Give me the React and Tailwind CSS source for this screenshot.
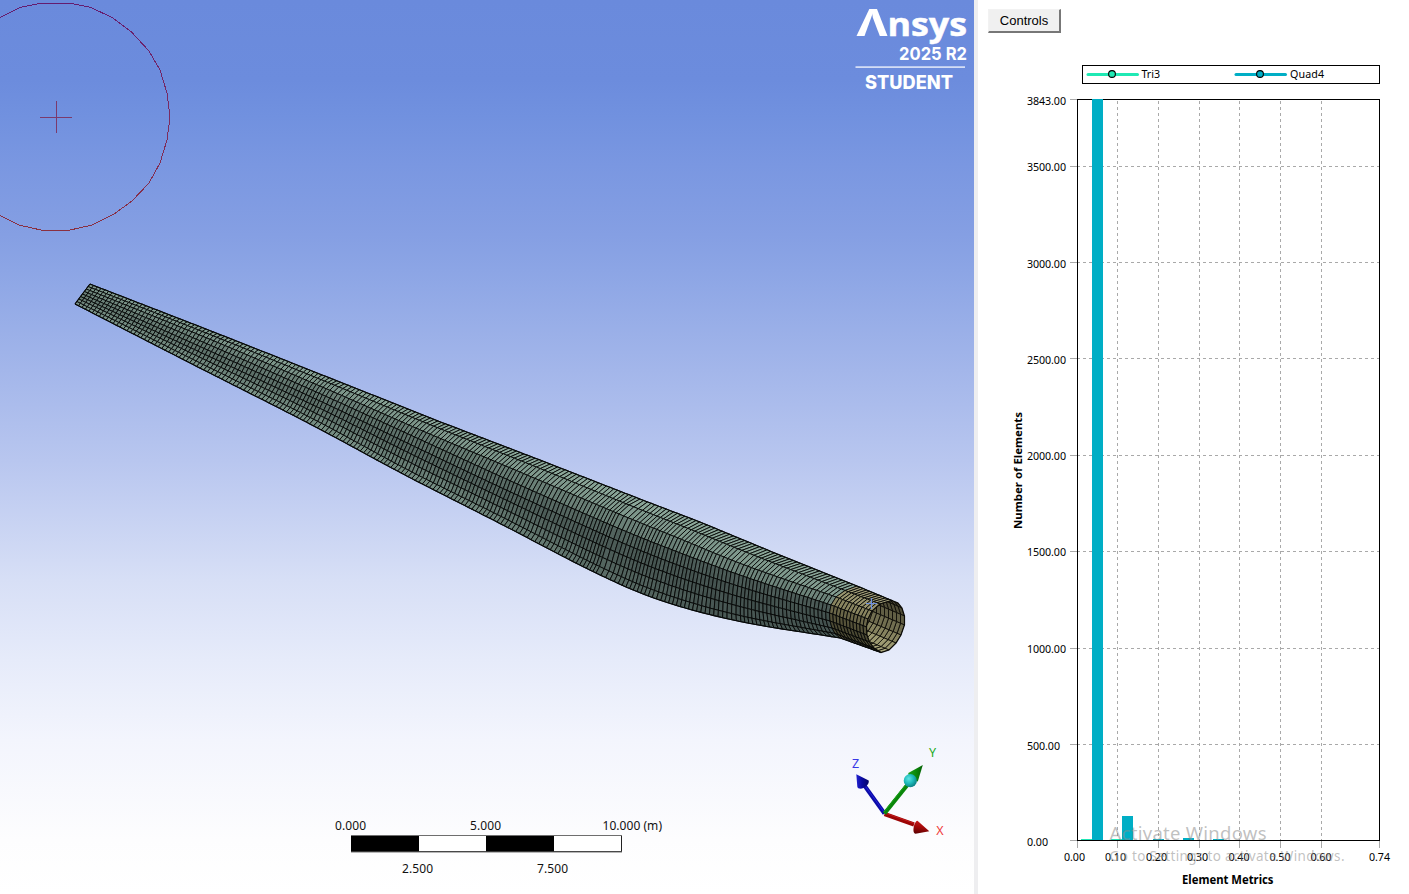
import React from "react";

const ROWS = 8;

// Cross sections of the blade shell: nine [x, y] points each, leading edge first.
const STATIONS = [
  [[90, 284], [88, 286.5], [86.2, 289], [84.3, 291.5], [82.4, 294], [80.5, 296.5], [78.7, 299], [76.8, 301.5], [75, 304]],
  [[215, 332.5], [211, 335], [208, 338.5], [205, 343], [202, 347.5], [199.5, 352], [197, 356], [194, 360], [191, 363.5]],
  [[340, 382], [334, 385], [329, 390], [325, 396], [322, 402], [319, 408], [316, 413.5], [313, 419], [309, 423.5]],
  [[440, 421.7], [432, 425.5], [425, 432], [420, 439.5], [416.5, 447.5], [413, 455], [410, 462.5], [407, 469.5], [403, 474]],
  [[540, 460], [530, 464.5], [521, 472.5], [515, 483], [511.5, 492.5], [508, 501], [505, 509.5], [502, 517], [498, 522.5]],
  [[640, 499], [629, 505], [619, 514], [613, 526], [609, 537], [605.5, 547.5], [602.5, 557.5], [599.5, 566.5], [596, 573]],
  [[700, 522], [688, 528.5], [678, 538], [672.5, 550], [669.5, 562], [667, 573], [665, 583.500], [663, 593.500], [661, 600.5]],
  [[770, 551], [757, 556.5], [747, 566], [742.5, 576], [741, 587], [740, 597], [739.5, 606.500], [739.5, 615.500], [740, 621.5]],
  [[857, 586], [845, 590.5], [836, 597], [831, 605], [829.5, 613], [830, 621], [832, 628], [835, 633.5], [840, 638]],
];

const RIM = [[892, 600.5], [880, 604], [872, 611], [868, 619], [866.5, 627], [867, 635], [869.5, 642], [874, 648], [881, 652.5]];

const spline = (a, b, c, d, u) =>
  0.5 * (2 * b + (c - a) * u + (2 * a - 5 * b + 4 * c - d) * u * u + (3 * b - a - 3 * c + d) * u * u * u);

function section(x) {
  let s = 0;
  while (s < STATIONS.length - 2 && STATIONS[s + 1][0][0] < x) s++;
  const b = STATIONS[s];
  const c = STATIONS[s + 1];
  const u = (x - b[0][0]) / (c[0][0] - b[0][0]);
  const a = STATIONS[s - 1];
  const d = STATIONS[s + 2];
  return b.map((p, i) =>
    [0, 1].map((k) => {
      const before = a ? a[i][k] : 2 * p[k] - c[i][k];
      const after = d ? d[i][k] : 2 * c[i][k] - p[k];
      if (i === 0) return p[k] + (c[i][k] - p[k]) * u;
      return spline(before, p[k], c[i][k], after, u);
    })
  );
}

const COLUMNS = 205;
const shell = Array.from({ length: COLUMNS + 1 }, (_, i) => section(90 + (767 * i) / COLUMNS));
const tube = Array.from({ length: 12 }, (_, i) => {
  const u = i / 11;
  return RIM.map((p, r) => {
    const q = STATIONS[STATIONS.length - 1][r];
    return [q[0] + (p[0] - q[0]) * u, q[1] + (p[1] - q[1]) * u];
  });
});

const TIP_SHADE = [0.85, 0.75, 0.65, 0.55, 0.5, 0.55, 0.68, 0.8];
const MID_SHADE = [0.98, 0.82, 0.5, 0.36, 0.26, 0.36, 0.52, 0.7];
const ROOT_SHADE = [1, 0.85, 0.6, 0.12, 0.03, 0.02, 0.06, 0.1];
const mix = (a, b, u) => a + (b - a) * u;

function shellFill(col, row) {
  const u = col / COLUMNS;
  const level =
    u < 0.5
      ? mix(TIP_SHADE[row], MID_SHADE[row], u / 0.5)
      : mix(MID_SHADE[row], ROOT_SHADE[row], Math.min(1, (u - 0.5) / 0.36));
  const grain = (((col * 7 + row * 13) % 5) - 2) * 1.5;
  const v = Math.max(0, level);
  return `rgb(${Math.round(mix(66, 138, v) + grain)},${Math.round(mix(80, 166, v) + grain)},${Math.round(mix(77, 152, v) + grain)})`;
}

const TUBE_FILL = ["#a19d78", "#98946e", "#88845f", "#6a6648", "#555239", "#4b4933", "#4a4832", "#57533b"];

const pts = (list) => list.map((p) => `${p[0].toFixed(1)},${p[1].toFixed(1)}`).join(" ");

function quads(grid, fill, key) {
  const out = [];
  for (let c = 0; c < grid.length - 1; c++) {
    for (let r = 0; r < ROWS; r++) {
      out.push(
        <polygon
          key={`${key}-${c}-${r}`}
          points={pts([grid[c][r], grid[c + 1][r], grid[c + 1][r + 1], grid[c][r + 1]])}
          fill={fill(c, r)}
        />
      );
    }
  }
  return out;
}

const INNER_EDGE = [[892, 600.5], [898, 603], [902, 608], [904.5, 616], [904.5, 625], [901, 635], [896, 643], [889, 650], [881, 652.5]];
const OPENING = [...INNER_EDGE, ...RIM.slice(1, 8).reverse()];
const INNER_FILL = ["#3c3a2a", "#423f2d", "#514e38", "#615e44", "#716e50", "#86835f", "#9c9970", "#a8a57b"];
const inner = Array.from({ length: 11 }, (_, i) => INNER_EDGE.map((p) => [p[0] - i * 4, p[1] - i * 1.7]));

function Blade() {
  return (
    <g>
      <g stroke="#040605" strokeWidth="0.9" strokeLinejoin="round">
        {quads(shell, shellFill, "s")}
        {quads(tube, (c, r) => TUBE_FILL[r], "t")}
      </g>
      <clipPath id="opening">
        <polygon points={pts(OPENING)} />
      </clipPath>
      <polygon points={pts(OPENING)} fill="#5b583f" />
      <g clipPath="url(#opening)" stroke="#0c0b07" strokeWidth="0.85">
        {quads(inner, (c, r) => INNER_FILL[r], "i")}
      </g>
      <polygon points={pts(OPENING)} fill="none" stroke="#0c0b07" strokeWidth="1.2" />
      <g stroke="#060908" strokeWidth="1.1" fill="none">
        <polyline points={pts(shell.map((s) => s[0]))} />
        <polyline points={pts(shell.map((s) => s[8]))} />
        <polyline points={pts(tube.map((s) => s[0]))} />
        <polyline points={pts(tube.map((s) => s[8]))} />
        <polyline points={pts(shell[0])} />
      </g>
      <path d="M866 603.5h11M871.5 598v11" stroke="#6c8fe0" strokeWidth="1.2" fill="none" />
    </g>
  );
}

function Probe() {
  return (
    <g fill="none" shapeRendering="crispEdges">
      <polygon
        points="72,3.5 91,7.5 112,17.5 131,31.5 149,51 160,70 167,93 170,117 167,140 160,163 149,183 132,201 114,214 92,225 68,230.5 43,230.5 19,225 0,215.5 -30,190 -50,150 -58,117 -50,80 -30,42 0,17.5 20,7.5 39,3.5"
        stroke="url(#ring)"
      />
      <path d="M40 117.5h32M56.5 101v32" stroke="#7b3a6c" />
    </g>
  );
}

function Triad() {
  return (
    <g>
      <path d="M884.5 813.5L864 785" stroke="#0b0ba8" strokeWidth="4" />
      <path d="M884 812L863 783" stroke="#2222d8" strokeWidth="1" />
      <path d="M856.3 774.3l12.4 6.2c.8 3-2.6 7.2-7.8 8.3-2.200 0-3.500-.8-3.600-2.200z" fill="url(#blueCone)" />
      <path d="M884.5 814L914 824.5" stroke="#9c0505" strokeWidth="4" />
      <path d="M885 813L914 823.3" stroke="#c21a1a" strokeWidth="1" />
      <path d="M929.3 831.3L917.5 820.7c-2.5.3-4.5 6.5-4 10.5.3 1.5 1 2.5 2 2.5z" fill="url(#redCone)" />
      <path d="M884.5 813.5L909 783" stroke="#0a860a" strokeWidth="4" />
      <path d="M884 812L907 783" stroke="#18a418" strokeWidth="1" />
      <path d="M922.8 765L908.3 773c-.5 3 4.5 7.5 9.5 8.5z" fill="url(#greenCone)" />
      <circle cx="910.3" cy="780.7" r="6.6" fill="url(#ball)" />
      <g fontFamily="'Noto Sans', sans-serif" fontSize="12.5">
        <text x="852" y="768" fill="#3838e6">Z</text>
        <text x="929" y="757" fill="#22aa22">Y</text>
        <text x="936.3" y="834.5" fill="#f03a3a">X</text>
      </g>
    </g>
  );
}

function Brand() {
  return (
    <g fill="#fff">
      <path d="M871.5 9H877L887.5 36H879.8L872.8 17.500z" />
      <path d="M869.300 9H874.300L864.500 36H856.500z" />
      <g fontFamily="'Open Sans', 'Noto Sans', sans-serif" fontWeight="700">
        <text x="887.5" y="35.5" fontSize="32" stroke="#fff" strokeWidth="0.5" textLength="79.500" lengthAdjust="spacingAndGlyphs">nsys</text>
      </g>
      <g fontFamily="Inter, sans-serif" fontWeight="700">
        <text x="899" y="60" fontSize="18" textLength="68" lengthAdjust="spacingAndGlyphs">2025 R2</text>
        <text x="865" y="88.5" fontSize="18.5" fontWeight="800" textLength="88" lengthAdjust="spacingAndGlyphs">STUDENT</text>
      </g>
      <rect x="855.5" y="66.3" width="109.5" height="1.600" fill="#dfe6f8" />
    </g>
  );
}

function Ruler() {
  return (
    <g>
      <rect x="351.5" y="835.5" width="270" height="16" fill="#fff" stroke="#222" />
      <rect x="351" y="836" width="68" height="16" fill="#000" />
      <rect x="486" y="836" width="68" height="16" fill="#000" />
      <path d="M351 835.5h271M351 852h271" stroke="#6e6e6e" />
      <g fontFamily="'Noto Sans', sans-serif" fontSize="12" fill="#111">
        <text x="335" y="830" textLength="31">0.000</text>
        <text x="470" y="830" textLength="31">5.000</text>
        <text x="602.5" y="830" textLength="59.5">10.000 (m)</text>
        <text x="402" y="873" textLength="31">2.500</text>
        <text x="537" y="873" textLength="31">7.500</text>
      </g>
    </g>
  );
}

function Viewport() {
  return (
    <section className="h-full w-[974px] shrink-0 bg-[linear-gradient(to_bottom,#6a8adc_0px,#6c8cdd_80px,#7191df_117px,#7a97e1_165px,#859fe3_235px,#8ca5e5_270px,#a3b6ea_370px,#b8c6ef_460px,#d7dff6_580px,#e6ebfa_660px,#f3f5fd_740px,#fdfdfe_840px,#ffffff_894px)]">
      <svg width="974" height="894" viewBox="0 0 974 894" className="block">
        <defs>
          <linearGradient id="ring" x1="0" y1="0" x2="0" y2="1">
            <stop offset="0" stopColor="#641c70" />
            <stop offset="0.5" stopColor="#7b2c62" />
            <stop offset="1" stopColor="#8a3040" />
          </linearGradient>
          <linearGradient id="blueCone">
            <stop offset="0" stopColor="#2323d2" />
            <stop offset="0.45" stopColor="#0909a0" />
            <stop offset="1" stopColor="#050568" />
          </linearGradient>
          <linearGradient id="redCone" x1="0.5" y1="0" x2="0.3" y2="1">
            <stop offset="0" stopColor="#c81c1c" />
            <stop offset="0.5" stopColor="#a30808" />
            <stop offset="1" stopColor="#5e0202" />
          </linearGradient>
          <linearGradient id="greenCone">
            <stop offset="0" stopColor="#1c9d1c" />
            <stop offset="0.5" stopColor="#0b8b0b" />
            <stop offset="1" stopColor="#056005" />
          </linearGradient>
          <radialGradient id="ball" cx="0.38" cy="0.35" r="0.7">
            <stop offset="0" stopColor="#5fe3e3" />
            <stop offset="0.5" stopColor="#1ebcbc" />
            <stop offset="1" stopColor="#0a7a7e" />
          </radialGradient>
        </defs>
        <Probe />
        <Blade />
        <Triad />
        <Brand />
        <Ruler />
      </svg>
    </section>
  );
}

const Y_TICKS = [
  ["3843.00", 99.5, 105],
  ["3500.00", 166.5, 171],
  ["3000.00", 262.5, 268],
  ["2500.00", 358.5, 364],
  ["2000.00", 455.5, 460],
  ["1500.00", 551.5, 556],
  ["1000.00", 648.5, 653],
  ["500.00", 744.5, 750],
  ["0.00", 840.5, 846],
];

const X_TICKS = [
  ["0.00", 1077.5, 1064],
  ["0.10", 1117.5, 1105],
  ["0.20", 1158.5, 1146],
  ["0.30", 1199.5, 1187],
  ["0.40", 1239.5, 1228.5],
  ["0.50", 1280.5, 1269.5],
  ["0.60", 1321.5, 1310.5],
  ["0.74", 1379.5, 1369],
];

const WIDTHS = { 7: 39, 6: 33, 4: 21 };

function Histogram() {
  return (
    <svg width="431" height="840" viewBox="978 54 431 840" className="block">
      <g shapeRendering="crispEdges" fill="none">
        <rect x="1082.5" y="65.5" width="297" height="18" stroke="#000" />
        <g stroke="#a9a9a9">
          {Y_TICKS.map(([label, y]) => (
            <path key={label} d={`M1070 ${y}H1077`} />
          ))}
          {X_TICKS.map(([label, x]) => (
            <path key={label} d={`M${x} 841V848`} />
          ))}
          <g strokeDasharray="3 3">
            {Y_TICKS.slice(1, -1).map(([label, y]) => (
              <path key={label} d={`M1077 ${y}H1379`} />
            ))}
            {X_TICKS.slice(1, -1).map(([label, x]) => (
              <path key={label} d={`M${x} 101V840`} />
            ))}
          </g>
        </g>
        <rect x="1077.5" y="99.5" width="302" height="741" stroke="#000" />
        <g fill="#00aec5">
          <rect x="1092" y="99" width="11" height="741" />
          <rect x="1122" y="816" width="11" height="24" />
          <rect x="1153" y="839" width="11" height="1" />
          <rect x="1183" y="838" width="11" height="2" />
          <rect x="1213" y="839" width="11" height="1" />
        </g>
        <g fill="#1fe5b5">
          <rect x="1081" y="839" width="11" height="1" />
          <rect x="1111" y="839" width="11" height="1" />
        </g>
      </g>
      <g strokeWidth="3" strokeLinecap="round">
        <path d="M1088 74.5H1137.5" stroke="#1fe9b4" />
        <path d="M1236 74.5H1285.5" stroke="#00aec5" />
      </g>
      <circle cx="1112" cy="74" r="3.4" fill="#1fe9b4" stroke="#000" strokeWidth="1.1" />
      <circle cx="1260" cy="74" r="3.4" fill="#00aec5" stroke="#000" strokeWidth="1.1" />
      <g fontFamily="'Noto Sans', sans-serif" fontSize="10.7" fill="#000">
        <text x="1141.5" y="78" textLength="18.5">Tri3</text>
        <text x="1290" y="78" textLength="34">Quad4</text>
        {Y_TICKS.map(([label, , y]) => (
          <text key={label} x="1027" y={y} textLength={WIDTHS[label.length]}>{label}</text>
        ))}
        {X_TICKS.map(([label, , x]) => (
          <text key={label} x={x} y="861" textLength="21">{label}</text>
        ))}
        <text x="1182" y="884" fontSize="11.5" fontWeight="700" textLength="91.5" lengthAdjust="spacingAndGlyphs">Element Metrics</text>
        <text transform="translate(1022 529) rotate(-90)" fontSize="11.2" fontWeight="700" textLength="117" lengthAdjust="spacingAndGlyphs">Number of Elements</text>
      </g>
      <g fontFamily="'Noto Sans', sans-serif" fill="#8c8c8c" fillOpacity="0.55">
        <text x="1109.5" y="840" fontSize="18.5" textLength="157">Activate Windows</text>
        <text x="1109.5" y="861" fontSize="13.5" textLength="235">Go to Settings to activate Windows.</text>
      </g>
    </svg>
  );
}

export default function App() {
  return (
    <main className="flex h-[894px] w-[1409px] overflow-hidden bg-white">
      <Viewport />
      <div className="w-1 shrink-0 bg-[#eeeef0]" />
      <aside className="flex w-[431px] flex-col">
        <div className="flex h-[54px] shrink-0 items-start pt-[9px] pl-[10px]">
          <button className="flex h-6 w-[73px] items-center justify-center border-t border-r-2 border-b-2 border-l border-t-[#f2f2f2] border-r-[#777777] border-b-[#777777] border-l-[#f2f2f2] bg-[#f0f0f0] font-['Liberation_Sans',sans-serif] text-[13px] leading-none text-black">
            Controls
          </button>
        </div>
        <Histogram />
      </aside>
    </main>
  );
}
